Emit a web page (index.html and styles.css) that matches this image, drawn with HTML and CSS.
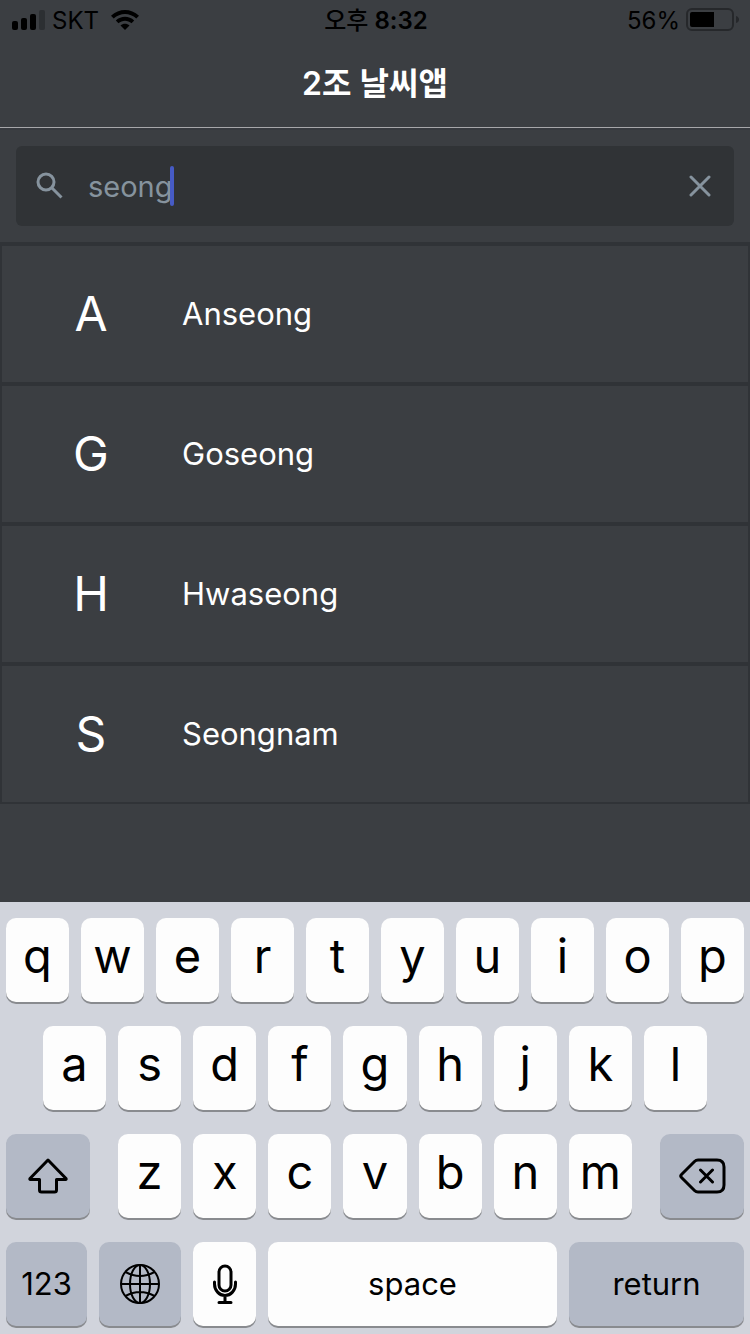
FILE: index.html
```html
<!DOCTYPE html>
<html lang="ko">
<head>
<meta charset="utf-8">
<meta name="viewport" content="width=device-width, initial-scale=1">
<title>2조 날씨앱</title>
<link rel="stylesheet" href="styles.css">
</head>
<body>
<div class="app">
  <div class="status">
    <div class="status-side">
      <svg class="signal" width="34" height="20" viewBox="0 0 34 20" aria-hidden="true">
        <rect x="0" y="11" width="6" height="9" rx="2"/>
        <rect x="9" y="8" width="6" height="12" rx="2"/>
        <rect x="18" y="4" width="6" height="16" rx="2"/>
        <rect x="27" y="0" width="6" height="20" rx="2" fill="#2c2f32"/>
      </svg>
      <span class="carrier">SKT</span>
      <svg class="wifi" width="28" height="20" viewBox="0 0 28 20" aria-hidden="true">
        <path d="M0 5.800C8-1.900 20-1.900 28 5.800L25.300 8.600C18.800 2.500 9.200 2.500 2.700 8.600Z"/>
        <path d="M4.800 10.500C10 5.600 18 5.600 23.200 10.500L20.500 13.300C16.800 9.900 11.200 9.900 7.500 13.300Z"/>
        <path d="M9.500 15.400C12.100 13.100 15.900 13.100 18.500 15.400L14 20Z"/>
      </svg>
    </div>
    <time class="clock"><span class="meridiem">오후</span> 8:32</time>
    <div class="status-side status-end">
      <span>56%</span>
      <svg class="battery" width="54" height="24" viewBox="0 0 54 24" aria-hidden="true">
        <rect x="1" y="1" width="46" height="21" rx="5" fill="none" stroke="#26282b" stroke-width="2"/>
        <path d="M6 4H28V19H6Q4 19 4 17V6Q4 4 6 4Z"/>
        <path d="M50 8Q53 9 53 11.500Q53 14 50 15Z" fill="#26282b"/>
      </svg>
    </div>
  </div>
  <header class="header"><h1 class="title">2조 날씨앱</h1></header>
  <form class="search" role="search">
    <div class="search-box">
      <svg class="search-icon" width="28" height="28" viewBox="0 0 28 28" aria-hidden="true">
        <circle cx="10" cy="10" r="8" fill="none" stroke="#86939e" stroke-width="3"/>
        <path d="M15.500 15.500L25.500 25.500" stroke="#86939e" stroke-width="3"/>
      </svg>
      <div class="field">
        <input class="query" type="text" value="seong" size="5" aria-label="Search city">
        <span class="caret"></span>
      </div>
      <button class="clear" type="button" aria-label="Clear">
        <svg width="22" height="22" viewBox="0 0 22 22" aria-hidden="true"><path d="M2 2L20 20M20 2L2 20" stroke="#86939e" stroke-width="3" stroke-linecap="round"/></svg>
      </button>
    </div>
  </form>
  <ul class="cities">
    <li class="city"><span class="initial">A</span><span class="name">Anseong</span></li>
    <li class="city"><span class="initial">G</span><span class="name">Goseong</span></li>
    <li class="city"><span class="initial">H</span><span class="name">Hwaseong</span></li>
    <li class="city"><span class="initial">S</span><span class="name">Seongnam</span></li>
  </ul>
  <div class="keyboard">
    <div class="keys keys-top">
      <button class="key">q</button><button class="key">w</button><button class="key">e</button><button class="key">r</button><button class="key">t</button><button class="key">y</button><button class="key">u</button><button class="key">i</button><button class="key">o</button><button class="key">p</button>
    </div>
    <div class="keys keys-home">
      <button class="key">a</button><button class="key">s</button><button class="key">d</button><button class="key">f</button><button class="key">g</button><button class="key">h</button><button class="key">j</button><button class="key">k</button><button class="key">l</button>
    </div>
    <div class="keys keys-low">
      <button class="key key-dark" aria-label="Shift">
        <svg width="40" height="36" viewBox="0 0 40 36" fill="none" stroke="#000" stroke-width="3" stroke-linejoin="round" aria-hidden="true"><path d="M20 2L38 20.500Q38.500 21.500 37.500 21.500H28.500V32Q28.500 34 26.500 34H13.500Q11.500 34 11.500 32V21.500H2.500Q1.500 21.500 2 20.500Z"/></svg>
      </button>
      <div class="keys keys-letters">
        <button class="key">z</button><button class="key">x</button><button class="key">c</button><button class="key">v</button><button class="key">b</button><button class="key">n</button><button class="key">m</button>
      </div>
      <button class="key key-dark" aria-label="Delete">
        <svg width="48" height="36" viewBox="0 0 48 36" fill="none" stroke="#000" stroke-width="3" stroke-linecap="round" stroke-linejoin="round" aria-hidden="true"><path d="M20 2H39Q46 2 46 9V27Q46 34 39 34H20Q18 34 16.500 32.500L3.500 19.500Q2 18 3.500 16.500L16.500 3.500Q18 2 20 2ZM22.500 12L34.500 24M34.500 12L22.500 24"/></svg>
      </button>
    </div>
    <div class="keys keys-bottom">
      <button class="key key-dark key-word">123</button>
      <button class="key key-dark" aria-label="Next keyboard">
        <svg width="42" height="42" viewBox="0 0 42 42" fill="none" stroke="#000" stroke-width="2" aria-hidden="true"><circle cx="21" cy="21" r="19"/><ellipse cx="21" cy="21" rx="10" ry="19"/><path d="M21 2V40M2 21H40M6.500 9Q21 17 35.500 9M6.500 33Q21 25 35.500 33"/></svg>
      </button>
      <button class="key" aria-label="Dictation">
        <svg width="26" height="42" viewBox="0 0 26 42" fill="none" stroke="#000" stroke-width="3" stroke-linecap="round" aria-hidden="true"><rect x="7" y="3" width="12" height="25" rx="6"/><path d="M2.500 19V21A10.500 11.500 0 0 0 23.500 21V19M13 33V38M7 39.500H19"/></svg>
      </button>
      <button class="key key-word">space</button>
      <button class="key key-dark key-word">return</button>
    </div>
  </div>
</div>
</body>
</html>
```
FILE: styles.css
```css
* { box-sizing: border-box; }
body {
  margin: 0;
  background: #3b3e42;
  font-family: Inter, "Noto Sans CJK KR", sans-serif;
}
button, input { font: inherit; border: 0; padding: 0; margin: 0; }
svg { display: block; flex: none; }
.app { min-height: 100vh; display: flex; flex-direction: column; }

.status {
  display: grid;
  grid-template-columns: 1fr auto 1fr;
  align-items: center;
  height: 40px;
  padding: 0 10px 0 12px;
  font-size: 24px;
  line-height: 38px;
}
.status-side { display: flex; align-items: center; gap: 6px; }
.status-end { justify-content: flex-end; }
.status-side span, .clock { padding-top: 2px; }
.carrier { margin-right: 6px; }
.clock { font-weight: 600; }
.meridiem { font-weight: 500; }

.header {
  height: 88px;
  display: flex;
  align-items: center;
  justify-content: center;
  border-bottom: 1px solid #a7a7aa;
}
.title { margin: 0; color: #fff; font-size: 32px; font-weight: 600; line-height: 48px; }

.search {
  padding: 16px;
  border-top: 2px solid #373a3f;
  border-bottom: 2px solid #303337;
}
.search-box {
  display: flex;
  align-items: center;
  height: 80px;
  padding: 0 22px 0 20px;
  border-radius: 6px;
  background: #303336;
  color: #86939e;
}
.field { flex: 1; min-width: 0; display: flex; align-items: center; margin-left: 24px; }
.query {
  field-sizing: content;
  background: none;
  color: inherit;
  padding-top: 2px;
  font-size: 29px;
  line-height: 40px;
  outline: none;
}
.caret { width: 4px; height: 40px; margin-left: -3px; border-radius: 2px; background: #465bc5; }
.clear { background: none; padding: 1px; }

.cities { margin: 0; padding: 0; list-style: none; color: #fff; }
.city {
  display: flex;
  align-items: center;
  height: 140px;
  padding-bottom: 2px;
  border: 2px solid #303337;
}
.initial { width: 180px; padding-right: 2px; text-align: center; font-size: 48px; }
.name { font-size: 31px; }

.keyboard {
  margin-top: auto;
  display: grid;
  gap: 24px;
  padding: 16px 6px 8px;
  background: #d1d4dc;
}
.keys { display: grid; gap: 12px; }
.keys-top { grid-template-columns: repeat(10, 1fr); }
.keys-home { grid-template-columns: repeat(9, 1fr); padding: 0 5%; }
.keys-low { grid-template-columns: 84fr 514fr 84fr; gap: 28px; }
.keys-letters { grid-template-columns: repeat(7, 1fr); }
.keys-bottom { grid-template-columns: 81fr 82fr 63fr 289fr 175fr; }
.key {
  display: flex;
  align-items: center;
  justify-content: center;
  min-width: 0;
  height: 84px;
  padding-bottom: 10px;
  border-radius: 10px;
  background: #fdfdfd;
  box-shadow: 0 2px 0 #898b8f;
  color: #000;
  font-size: 47px;
  font-weight: 400;
}
.key-dark { background: #b3b9c6; }
.key-word { padding-bottom: 2px; font-size: 31px; }
.key:has(svg) { padding-bottom: 0; }
```
